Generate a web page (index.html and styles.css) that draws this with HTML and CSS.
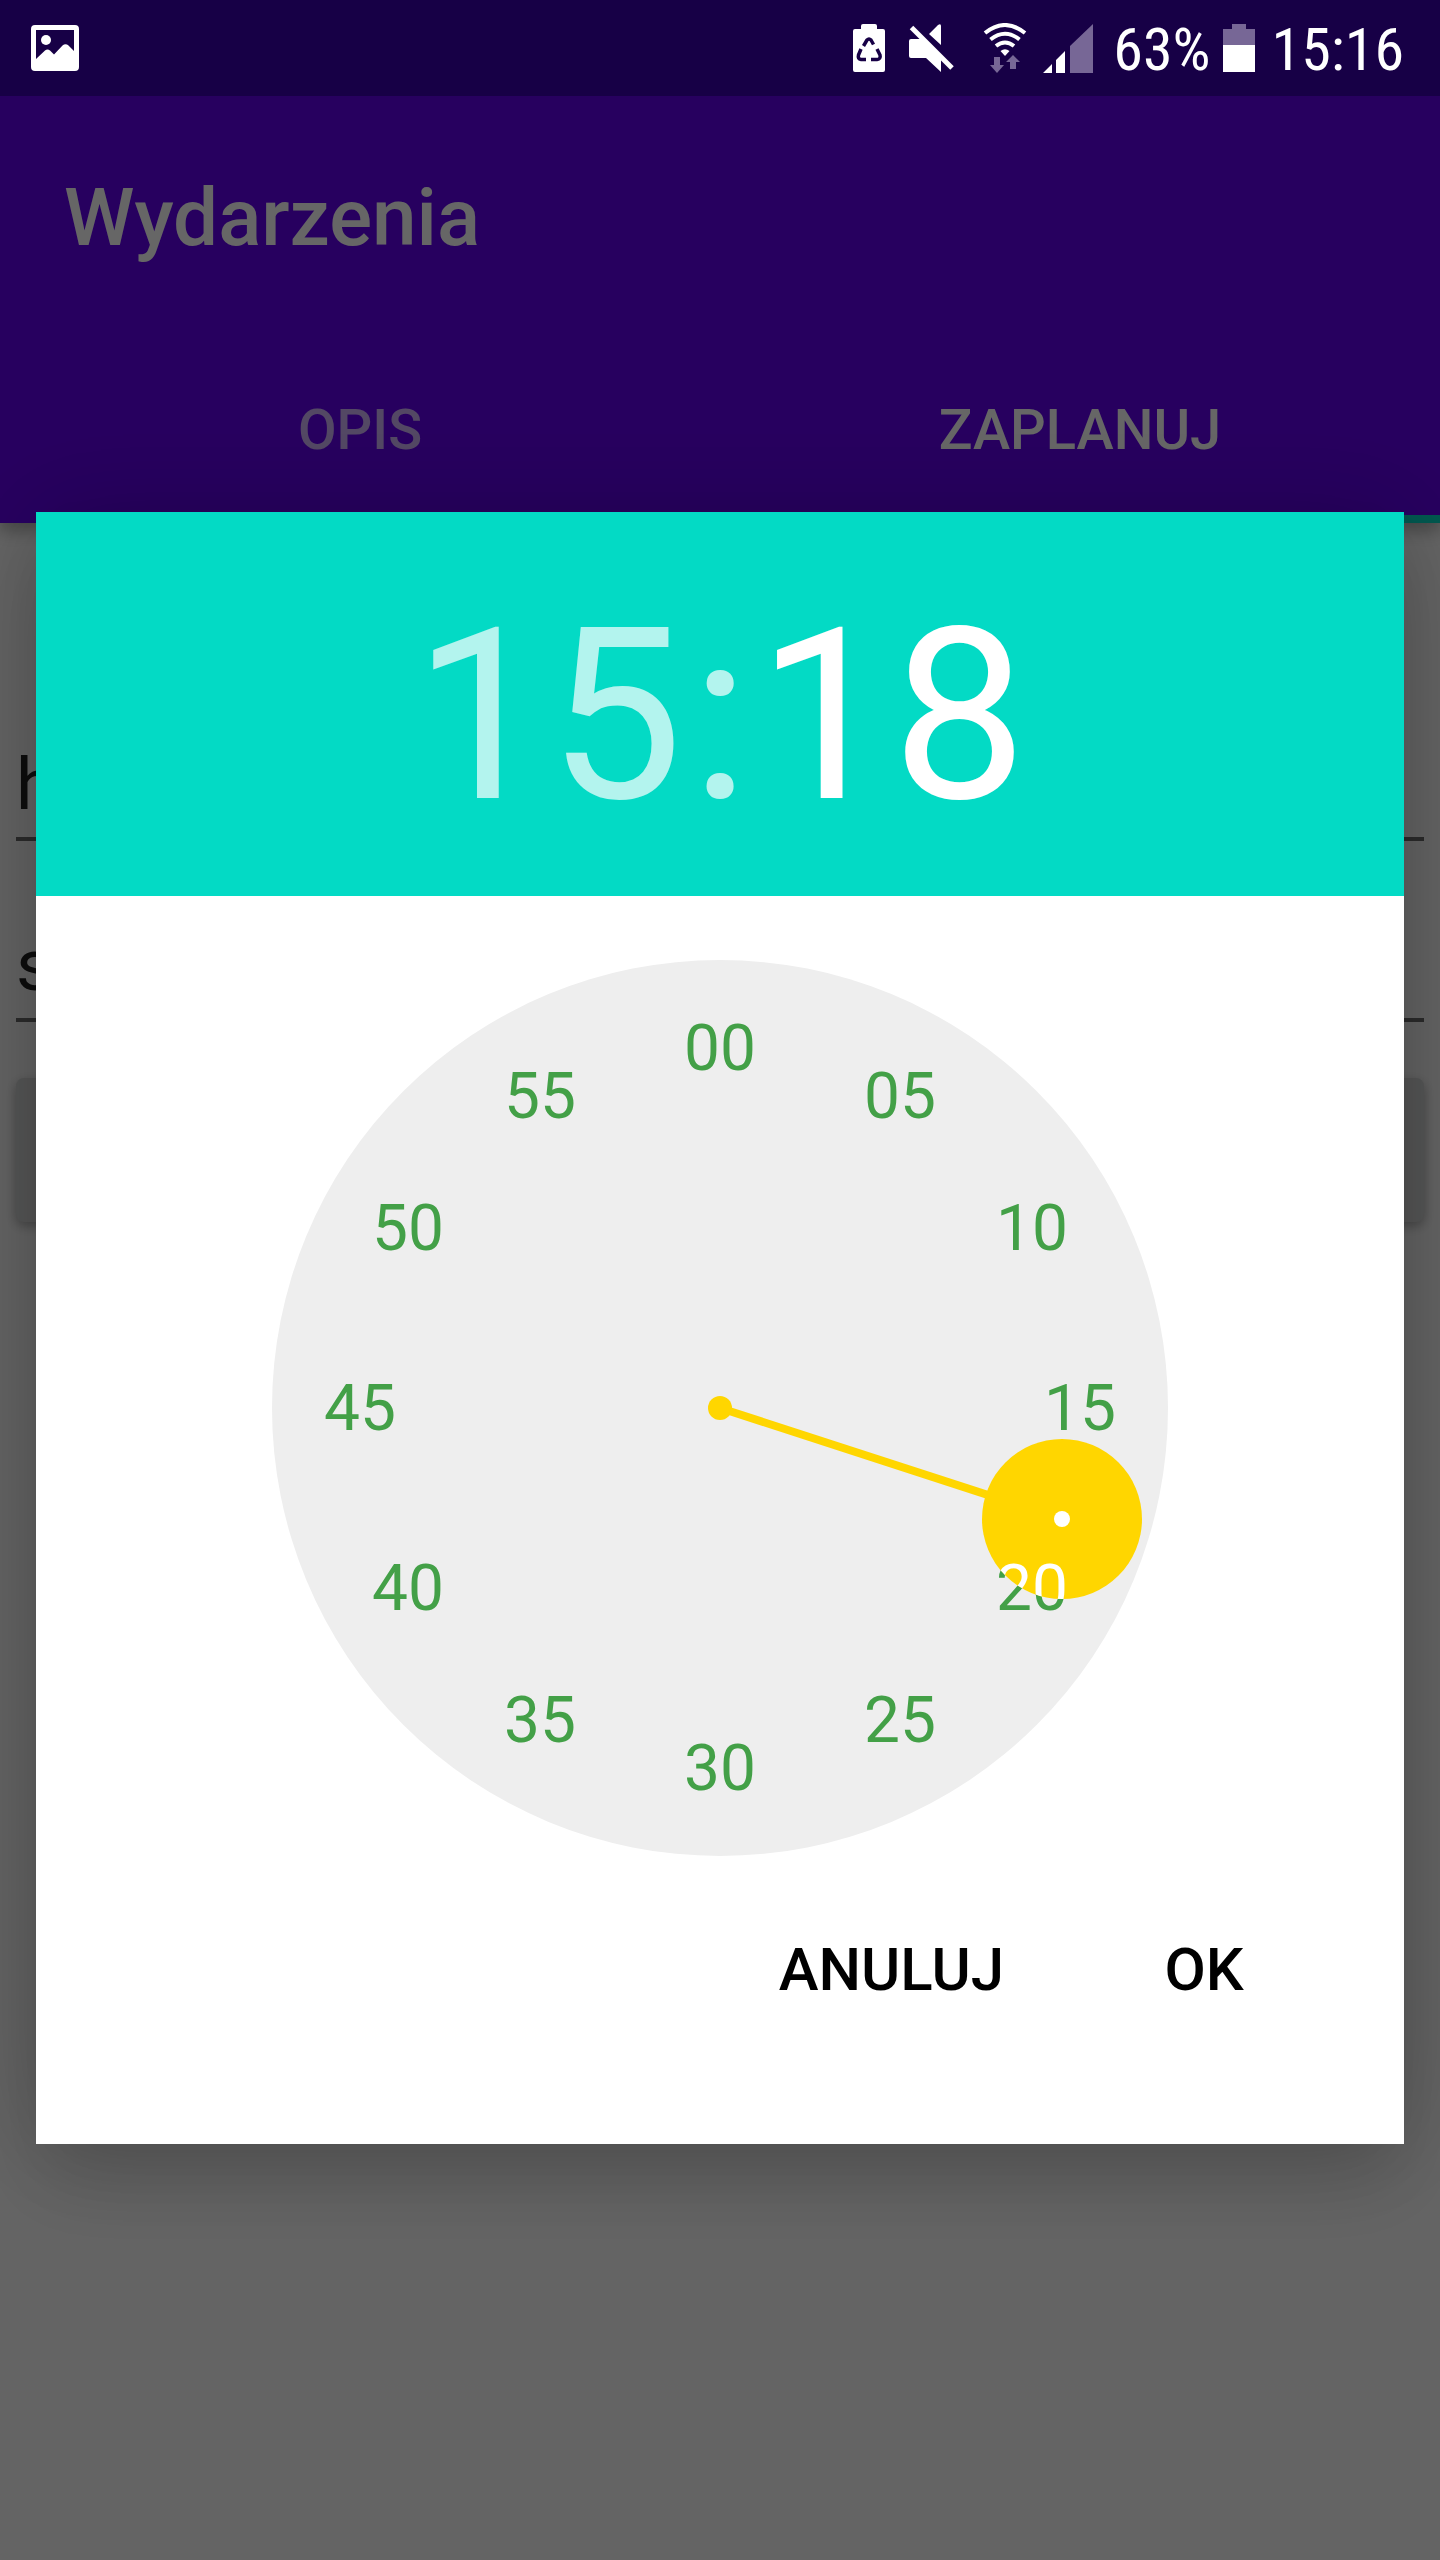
FILE: index.html
```html
<!DOCTYPE html>
<html lang="pl">
<head>
<meta charset="utf-8">
<meta name="viewport" content="width=device-width, initial-scale=1">
<title>Wydarzenia</title>
<link rel="stylesheet" href="styles.css">
</head>
<body>
<div class="status-bar">
  <svg class="icon-photo" viewBox="0 0 48 46" aria-hidden="true">
    <path fill="#fff" fill-rule="evenodd" d="M4 0H44Q48 0 48 4V42Q48 46 44 46H4Q0 46 0 42V4Q0 0 4 0ZM5 5V34L14 25.500Q16.500 23.500 19 25.500L23 29.500L31.500 20.500Q34.500 18 37.500 20.500L43 26V5Z"/>
    <circle cx="15" cy="15" r="5" fill="#fff"/>
  </svg>
  <div class="status-right">
    <svg class="icon-eco" viewBox="0 0 32 48" aria-hidden="true">
      <path fill="#fff" d="M10 0H22Q24 0 24 2V5H30Q32 5 32 7V46Q32 48 30 48H2Q0 48 0 46V7Q0 5 2 5H8V2Q8 0 10 0Z"/>
      <g fill="none" stroke="#170046" stroke-width="3.500" stroke-linejoin="round">
        <path d="M10.500 22L14 16Q16 14 18 16L20.500 20.500"/>
        <path d="M8 25L5.500 31Q4.500 35 8 35.500H13"/>
        <path d="M24 25L27 31Q28 35 24 35.500H18"/>
      </g>
      <path fill="#fff" d="M16 20L22 29H18V37H14V29H10Z"/>
    </svg>
    <svg class="icon-mute" viewBox="0 0 46 48" aria-hidden="true">
      <path fill="#fff" d="M0 17Q0 15 2 15H12L32 35V48L17 34H2Q0 34 0 32ZM20 10L29 1Q32-1 32 2V21Z"/>
      <path stroke="#fff" stroke-width="5" d="M2.500 3.500L43 44"/>
    </svg>
    <svg class="icon-wifi" viewBox="0 0 44 50" aria-hidden="true">
      <g fill="none" stroke="#fff" stroke-width="4">
        <path d="M2 10Q22-6 42 10"/>
        <path d="M7.500 16.500Q22 5 36.500 16.500"/>
        <path d="M13 23Q22 16 31 23"/>
      </g>
      <path fill="#fff" d="M17.500 28Q22 24.500 26.500 28L22 33Z"/>
      <path fill="#776796" d="M11 34H17V42H21L14 50L7 42H11ZM30 32L37 39H33V46H27V39H23Z"/>
    </svg>
    <svg class="icon-signal" viewBox="0 0 50 49" aria-hidden="true">
      <path fill="#fff" d="M0 49L9 40V49ZM13 36L22 27V49H13Z"/>
      <path fill="#776796" d="M27 22L50 0V49H27Z"/>
    </svg>
    <span class="status-text battery-level">63%</span>
    <svg class="icon-battery" viewBox="0 0 32 48" aria-hidden="true">
      <path fill="#776796" d="M9 0H23V5H32V21H0V5H9Z"/>
      <path fill="#fff" d="M0 21H32V48H0Z"/>
    </svg>
    <time class="status-text">15:16</time>
  </div>
</div>

<div class="app">
  <header class="app-bar">
    <h1 class="app-title">Wydarzenia</h1>
    <nav class="tabs">
      <a class="tab" href="#opis">OPIS</a>
      <a class="tab tab-active" href="#zaplanuj">ZAPLANUJ</a>
    </nav>
  </header>
  <form class="form">
    <input class="field" type="text" value="h" aria-label="Godzina">
    <input class="field" type="text" value="s" aria-label="Opis">
    <button class="submit" type="button" aria-label="Zaplanuj"></button>
  </form>
</div>

<div class="scrim">
  <section class="dialog" role="dialog" aria-label="Wybierz godzinę">
    <div class="time-header">
      <button class="time-part time-hour" type="button">15</button>
      <span class="time-part">:</span>
      <button class="time-part time-minute" type="button">18</button>
    </div>
    <div class="dialog-body">
      <svg class="dial" viewBox="-448 -448 896 896" role="img" aria-label="Minuty">
        <defs>
          <clipPath id="selector-clip"><circle cx="342" cy="111" r="80"/></clipPath>
        </defs>
        <circle r="448" fill="#eee"/>
        <g class="dial-numbers">
          <text x="0" y="-338">00</text>
          <text x="180" y="-290">05</text>
          <text x="312" y="-158">10</text>
          <text x="360" y="22">15</text>
          <text x="312" y="202">20</text>
          <text x="180" y="334">25</text>
          <text x="0" y="382">30</text>
          <text x="-180" y="334">35</text>
          <text x="-312" y="202">40</text>
          <text x="-360" y="22">45</text>
          <text x="-312" y="-158">50</text>
          <text x="-180" y="-290">55</text>
        </g>
        <g fill="#ffd600">
          <circle r="12"/>
          <path stroke="#ffd600" stroke-width="8" d="M0 0L342 111"/>
          <circle cx="342" cy="111" r="80"/>
        </g>
        <circle cx="342" cy="111" r="8" fill="#fff"/>
        <g class="dial-numbers dial-selected" clip-path="url(#selector-clip)" aria-hidden="true">
          <text x="312" y="202">20</text>
        </g>
      </svg>
      <div class="actions">
        <button class="action" type="button">ANULUJ</button>
        <button class="action" type="button">OK</button>
      </div>
    </div>
  </section>
</div>
</body>
</html>
```
FILE: styles.css
```css
* {
  box-sizing: border-box;
}

body {
  margin: 0;
  background: #fafafa;
  font-family: Roboto, "Noto Sans", sans-serif;
}

button,
input {
  font: inherit;
  border: 0;
  padding: 0;
  background: none;
}

.status-bar {
  position: fixed;
  inset: 0 0 auto;
  z-index: 3;
  display: flex;
  align-items: center;
  justify-content: space-between;
  height: 96px;
  padding: 0 36px 0 31px;
  background: #170046;
  color: #fff;
}

.status-right {
  display: flex;
  align-items: center;
}

.status-text {
  font-family: "Roboto Condensed", "Liberation Sans Narrow", Roboto, sans-serif;
  font-size: 60px;
  line-height: 96px;
  padding-top: 4px;
}

.icon-photo {
  width: 48px;
  height: 46px;
}

.icon-eco {
  width: 32px;
  height: 48px;
}

.icon-mute {
  width: 46px;
  height: 48px;
  margin-left: 24px;
}

.icon-wifi {
  width: 44px;
  height: 50px;
  margin-left: 28px;
}

.icon-signal {
  width: 50px;
  height: 49px;
  margin-left: 16px;
}

.battery-level {
  margin-left: 20px;
}

.icon-battery {
  width: 32px;
  height: 48px;
  margin: 0 17px 0 12px;
}

.app {
  min-height: 100vh;
  padding-top: 96px;
}

.app-bar {
  background: #6200ee;
  color: #fff;
  box-shadow: 0 8px 16px rgba(0, 0, 0, 0.3);
}

.app-title {
  margin: 0;
  padding: 74px 64px 65px;
  font-size: 80px;
  font-weight: 500;
  line-height: 96px;
}

.tabs {
  display: grid;
  grid-template-columns: 1fr 1fr;
}

.tab {
  height: 192px;
  border-bottom: 8px solid transparent;
  color: rgba(255, 255, 255, 0.7);
  font-size: 56px;
  font-weight: 500;
  line-height: 198px;
  text-align: center;
  text-decoration: none;
}

.tab-active {
  border-color: #03dac5;
  color: #fff;
}

.form {
  display: flex;
  flex-direction: column;
  padding: 209px 16px 0;
}

.field {
  width: 100%;
  height: 109px;
  margin-bottom: 72px;
  border-bottom: 4px solid #6b6b6b;
  color: #212121;
  font-size: 72px;
}

.field + .field {
  margin-bottom: 56px;
}

.submit {
  height: 144px;
  border-radius: 8px;
  background: #d6d7d7;
  box-shadow: 0 4px 12px rgba(0, 0, 0, 0.3);
}

.scrim {
  position: fixed;
  inset: 0;
  z-index: 2;
  display: flex;
  align-items: center;
  padding: 96px 36px 0;
  background: rgba(0, 0, 0, 0.6);
}

.dialog {
  flex: 1;
  background: #fff;
  box-shadow: 0 0 96px rgba(0, 0, 0, 0.2), 0 40px 80px rgba(0, 0, 0, 0.12);
}

.time-header {
  display: grid;
  grid-template-columns: 1fr auto 1fr;
  gap: 8px;
  height: 384px;
  background: #03dac5;
}

.time-part {
  color: rgba(255, 255, 255, 0.7);
  font-size: 240px;
  line-height: 408px;
}

.time-hour {
  text-align: right;
}

.time-minute {
  color: #fff;
  text-align: left;
}

.dialog-body {
  padding: 64px 112px 127px;
}

.dial {
  display: block;
  width: 100%;
  max-width: 896px;
  margin: 0 auto;
}

.dial-numbers {
  fill: #43a047;
  font-size: 64px;
  text-anchor: middle;
}

.dial-selected {
  fill: #fff;
}

.actions {
  display: flex;
  justify-content: flex-end;
  gap: 64px;
  padding-top: 65px;
}

.action {
  min-width: 176px;
  height: 96px;
  padding: 0 48px;
  color: #000;
  font-size: 60px;
  font-weight: 500;
}
```
